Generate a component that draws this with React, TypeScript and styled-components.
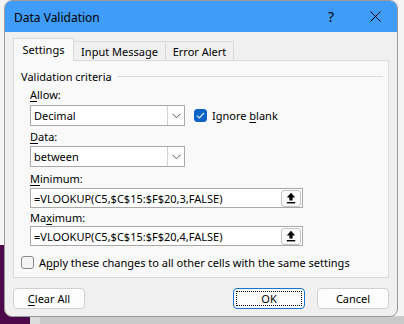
import React from "react";
import styled, { createGlobalStyle, css } from "styled-components";

const Global = createGlobalStyle`
  html, body { margin: 0; padding: 0; }
  body { font-family: "Noto Sans", "Segoe UI", sans-serif; font-size: 11px; color: #000; }
  * { box-sizing: border-box; }
`;

const Screen = styled.div`
  width: 404px;
  height: 324px;
  overflow: hidden;
  padding-left: 4px;
  background:
    linear-gradient(#4d0a4a, #4d0a4a) 0 245px / 30px 79px no-repeat,
    linear-gradient(#dcdcdc, #dcdcdc) 30px 316px / 10px 8px no-repeat,
    linear-gradient(#c9c9c9, #c9c9c9) 40px 316px / 364px 8px no-repeat,
    #f4f4f4;
`;

const Dialog = styled.div`
  width: 394px;
  height: 317px;
  border-radius: 8px;
  border: 1px solid #9a9a9a;
  background: #f0f0f0;
  overflow: hidden;
  display: flex;
  flex-direction: column;
`;

const TitleBar = styled.div`
  height: 31px;
  background: #409cf9;
  display: flex;
  align-items: center;
  padding: 0 0 0 9px;
  flex-shrink: 0;
`;

const Title = styled.div`
  flex: 1;
  font-size: 12px;
  padding-top: 1px;
`;

const TitleButton = styled.div`
  width: 44px;
  height: 31px;
  display: flex;
  align-items: center;
  justify-content: center;
  font-size: 14px;
`;

const Body = styled.div`
  padding: 7px 8px 0 8px;
  display: flex;
  flex-direction: column;
`;

const TabRow = styled.div`
  display: flex;
  align-items: flex-end;
  height: 22px;
  position: relative;
  z-index: 1;
  margin-bottom: -1px;
`;

const Tab = styled.div<{ $active?: boolean; $w: number }>`
  flex-shrink: 0;
  white-space: nowrap;
  width: ${(p) => p.$w}px;
  border: 1px solid #d9d9d9;
  border-left-width: ${(p) => (p.$active ? "1px" : "0")};
  height: ${(p) => (p.$active ? "23px" : "20px")};
  background: ${(p) => (p.$active ? "#f9f9f9" : "#f0f0f0")};
  border-bottom: ${(p) => (p.$active ? "none" : "1px solid #d9d9d9")};
  display: flex;
  align-items: center;
  justify-content: center;
  ${(p) => p.$active && css`padding-bottom: 2px;`}
  ${(p) => !p.$active && css`padding-top: 1px;`}
`;

const Panel = styled.div`
  height: 218px;
  border: 1px solid #d9d9d9;
  background: #f9f9f9;
  padding: 7px 5px 0 7px;
  display: flex;
  flex-direction: column;
`;

const GroupHead = styled.div`
  display: flex;
  align-items: center;
  gap: 5px;
  height: 17px;
  &::after {
    content: "";
    flex: 1;
    height: 1px;
    background: #dcdcdc;
  }
`;

const Indent = styled.div`
  padding-left: 9px;
  display: flex;
  flex-direction: column;
`;

const Label = styled.div<{ $top: number }>`
  margin-top: ${(p) => p.$top}px;
  height: 16px;
  line-height: 16px;
`;

const U = styled.span`
  text-decoration: underline;
  text-underline-offset: 2px;
`;

const SelectRow = styled.div<{ $top: number }>`
  display: flex;
  align-items: center;
  margin-top: ${(p) => p.$top}px;
`;

const Select = styled.div`
  width: 155px;
  height: 21px;
  border: 1px solid #a9a9a9;
  background: #fff;
  display: flex;
  align-items: stretch;
`;

const SelectText = styled.div`
  flex: 1;
  padding-left: 3px;
  display: flex;
  align-items: center;
`;

const DropBtn = styled.div`
  width: 17px;
  border-left: 1px solid #d3d3d3;
  display: flex;
  align-items: center;
  justify-content: center;
`;

const Check = styled.div<{ $checked?: boolean }>`
  width: 13px;
  height: 13px;
  border-radius: 3px;
  display: flex;
  align-items: center;
  justify-content: center;
  background: ${(p) => (p.$checked ? "#0b63c6" : "#f4f4f4")};
  border: 1px solid ${(p) => (p.$checked ? "#0b63c6" : "#8a8a8a")};
  flex-shrink: 0;
`;

const CheckLabel = styled.label<{ $left?: number }>`
  display: flex;
  align-items: center;
  gap: 5px;
  margin-left: ${(p) => p.$left ?? 0}px;
`;

const InputBox = styled.div<{ $top: number }>`
  width: 273px;
  height: 20px;
  border: 1px solid #a9a9a9;
  background: #fff;
  display: flex;
  align-items: center;
  padding: 0 1px 0 3px;
  margin-top: ${(p) => p.$top}px;
`;

const InputText = styled.div`
  flex: 1;
  white-space: nowrap;
  overflow: hidden;
`;

const RangeBtn = styled.div`
  width: 20px;
  height: 17px;
  border: 1px solid #c4c4c4;
  border-radius: 3px;
  background: #fbfbfb;
  display: flex;
  align-items: center;
  justify-content: center;
`;

const ApplyRow = styled.div`
  margin-top: 8px;
  height: 16px;
  display: flex;
`;

const Footer = styled.div`
  display: flex;
  align-items: center;
  margin-top: 10px;
  gap: 12px;
`;

const Button = styled.div<{ $primary?: boolean }>`
  width: 72px;
  height: 21px;
  border-radius: 4px;
  border: 1px solid ${(p) => (p.$primary ? "#1a73d0" : "#d0d0d0")};
  background: #fdfdfd;
  display: flex;
  align-items: center;
  justify-content: center;
  position: relative;
  ${(p) =>
    p.$primary &&
    css`
      &::after {
        content: "";
        position: absolute;
        inset: 2px;
        border: 1px dotted #000;
      }
    `}
`;

const Spacer = styled.div`
  flex: 1;
`;

const Chevron = () => (
  <svg width="9" height="6" viewBox="0 0 9 6">
    <path d="M0.5 0.8 L4.5 4.8 L8.5 0.8" fill="none" stroke="#555" strokeWidth="1" />
  </svg>
);

const Tick = () => (
  <svg width="9" height="7" viewBox="0 0 9 7">
    <path d="M1 3.6 L3.4 6 L8 1" fill="none" stroke="#dfe9f7" strokeWidth="1.2" />
  </svg>
);

const UpArrow = () => (
  <svg width="10" height="12" viewBox="0 0 10 12">
    <path d="M5 0.8 L0.8 5.5 H3.4 V8.6 H6.6 V5.5 H9.2 Z" fill="#000" />
    <rect x="0.8" y="10" width="8.4" height="1.4" fill="#000" />
  </svg>
);

const CloseIcon = () => (
  <svg width="11" height="11" viewBox="0 0 11 11">
    <path d="M0.5 0.5 L10.5 10.5 M10.5 0.5 L0.5 10.5" stroke="#000" strokeWidth="1" />
  </svg>
);

export default function App() {
  return (
    <Screen>
      <Global />
      <Dialog>
        <TitleBar>
          <Title>Data Validation</Title>
          <TitleButton>?</TitleButton>
          <TitleButton>
            <CloseIcon />
          </TitleButton>
        </TitleBar>
        <Body>
          <TabRow>
            <Tab $active $w={61}>Settings</Tab>
            <Tab $w={92}>Input Message</Tab>
            <Tab $w={68}>Error Alert</Tab>
          </TabRow>
          <Panel>
            <GroupHead>Validation criteria</GroupHead>
            <Indent>
              <Label $top={2}>
                <U>A</U>llow:
              </Label>
              <SelectRow $top={2}>
                <Select>
                  <SelectText>Decimal</SelectText>
                  <DropBtn>
                    <Chevron />
                  </DropBtn>
                </Select>
                <CheckLabel $left={9}>
                  <Check $checked>
                    <Tick />
                  </Check>
                  <span>
                    Ignore <U>b</U>lank
                  </span>
                </CheckLabel>
              </SelectRow>
              <Label $top={3}>
                <U>D</U>ata:
              </Label>
              <SelectRow $top={1}>
                <Select>
                  <SelectText>between</SelectText>
                  <DropBtn>
                    <Chevron />
                  </DropBtn>
                </Select>
              </SelectRow>
              <Label $top={4}>
                <U>M</U>inimum:
              </Label>
              <InputBox $top={1}>
                <InputText>=VLOOKUP(C5,$C$15:$F$20,3,FALSE)</InputText>
                <RangeBtn>
                  <UpArrow />
                </RangeBtn>
              </InputBox>
              <Label $top={2}>
                Ma<U>x</U>imum:
              </Label>
              <InputBox $top={0}>
                <InputText>=VLOOKUP(C5,$C$15:$F$20,4,FALSE)</InputText>
                <RangeBtn>
                  <UpArrow />
                </RangeBtn>
              </InputBox>
            </Indent>
            <ApplyRow>
              <CheckLabel>
                <Check />
                <span>
                  A<U>p</U>ply these changes to all other cells with the same settings
                </span>
              </CheckLabel>
            </ApplyRow>
          </Panel>
          <Footer>
            <Button>
              <span>
                <U>C</U>lear All
              </span>
            </Button>
            <Spacer />
            <Button $primary>OK</Button>
            <Button>Cancel</Button>
          </Footer>
        </Body>
      </Dialog>
    </Screen>
  );
}
